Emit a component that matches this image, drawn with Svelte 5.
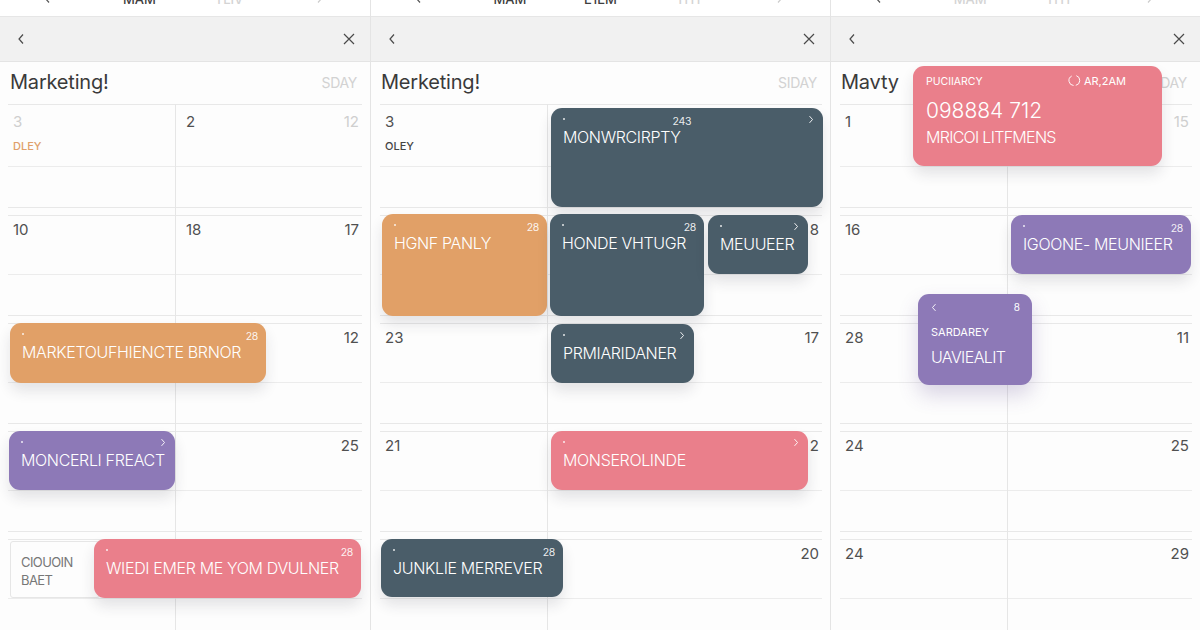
<script lang="ts">
	type Ev = {
		x: number;
		y: number;
		w: number;
		h: number;
		tone: string;
		label: string;
		corner?: string;
		chevron?: boolean;
	};

	const panels = [
		{
			tabs: ['MAM', 'TLIV'],
			tabOn: [0],
			title: 'Marketing!',
			side: 'SDAY',
			weeks: [
				{ left: '3', leftDim: true, note: 'DLEY', noteTone: 'warm', mid: '2', right: '12', rightDim: true },
				{ left: '10', mid: '18', right: '17' },
				{ right: '12' },
				{ right: '25' },
				{}
			],
			events: [
				{ x: 10, y: 323, w: 256, h: 60, tone: 'orange', label: 'MARKETOUFHIENCTE BRNOR', corner: '28' },
				{ x: 9, y: 431, w: 166, h: 59, tone: 'purple', label: 'MONCERLI FREACT', chevron: true },
				{ x: 94, y: 539, w: 267, h: 59, tone: 'pink', label: 'WIEDI EMER ME YOM DVULNER', corner: '28' }
			] as Ev[]
		},
		{
			tabs: ['MAM', 'E1EM', 'THY'],
			tabOn: [0, 1],
			title: 'Merketing!',
			side: 'SIDAY',
			weeks: [
				{ left: '3', note: 'OLEY' },
				{ right: '8' },
				{ left: '23', right: '17' },
				{ left: '21', right: '2' },
				{ right: '20' }
			],
			events: [
				{ x: 180, y: 108, w: 272, h: 99, tone: 'slate', label: 'MONWRCIRPTY', corner: '243', chevron: true },
				{ x: 11, y: 214, w: 165, h: 102, tone: 'orange', label: 'HGNF PANLY', corner: '28' },
				{ x: 179, y: 214, w: 154, h: 102, tone: 'slate', label: 'HONDE VHTUGR', corner: '28' },
				{ x: 337, y: 215, w: 100, h: 59, tone: 'slate', label: 'MEUUEER', chevron: true },
				{ x: 180, y: 324, w: 143, h: 59, tone: 'slate', label: 'PRMIARIDANER', chevron: true },
				{ x: 180, y: 431, w: 257, h: 59, tone: 'pink', label: 'MONSEROLINDE', chevron: true },
				{ x: 10, y: 539, w: 182, h: 58, tone: 'slate', label: 'JUNKLIE MERREVER', corner: '28' }
			] as Ev[]
		},
		{
			tabs: ['MAM', 'THY'],
			tabOn: [],
			title: 'Mavty',
			side: 'SIDAY',
			weeks: [
				{ left: '1', right: '15', rightDim: true },
				{ left: '16' },
				{ left: '28', right: '11' },
				{ left: '24', right: '25' },
				{ left: '24', right: '29' }
			],
			events: [
				{ x: 180, y: 215, w: 180, h: 59, tone: 'purple', label: 'IGOONE- MEUNIEER', corner: '28' }
			] as Ev[]
		}
	];
</script>

{#snippet chevronIcon(dir: string)}
	<svg class="chev" viewBox="0 0 8 12" width="8" height="12" aria-hidden="true">
		<path d={dir === 'left' ? 'M6 1.5 2 6l4 4.5' : 'M2 1.5 6 6l-4 4.5'} />
	</svg>
{/snippet}

<div class="board">
	{#each panels as panel, p}
		<section class="panel">
			<div class="tabs">
				<span class="tab">{@render chevronIcon('left')}</span>
				{#each panel.tabs as tab, i}
					<span class="tab" class:on={panel.tabOn.includes(i)}>{tab}</span>
				{/each}
				<span class="tab faint">{@render chevronIcon('right')}</span>
			</div>

			<header class="nav">
				{@render chevronIcon('left')}
				<svg class="close" viewBox="0 0 12 12" width="12" height="12" aria-hidden="true">
					<path d="M1 1l10 10M11 1 1 11" />
				</svg>
			</header>

			<div class="heading">
				<h2>{panel.title}</h2>
				<span>{panel.side}</span>
			</div>

			<div class="cal">
				{#each panel.weeks as week}
					<div class="week">
						<div class="days">
							<div class="cell">
								<span class="num" class:dim={week.leftDim}>{week.left ?? ''}</span>
								{#if week.note}
									<span class="note {week.noteTone ?? ''}">{week.note}</span>
								{/if}
							</div>
							<div class="cell split">
								<span class="num">{week.mid ?? ''}</span>
								<span class="num" class:dim={week.rightDim}>{week.right ?? ''}</span>
							</div>
						</div>
						<div class="spare"></div>
					</div>
				{/each}
			</div>

			{#if p === 0}
				<div class="ghost">CIOUOIN<br />BAET</div>
			{/if}

			{#if p === 2}
				<article class="event pink feature">
					<div class="meta">
						<span>PUCIIARCY</span>
						<span class="time">
							<svg viewBox="0 0 14 14" width="13" height="13" aria-hidden="true">
								<path d="M4 2.2A5.4 5.4 0 0 0 6 12.4M9 1.8a5.4 5.4 0 0 1-.6 10.4" />
							</svg>
							AR,2AM
						</span>
					</div>
					<div class="amount">098884 712</div>
					<div class="label">MRICOI LITFMENS</div>
				</article>
				<article class="event purple small">
					<div class="meta">
						{@render chevronIcon('left')}
						<span class="glyph">8</span>
					</div>
					<div class="sub">SARDAREY</div>
					<div class="label">UAVIEALIT</div>
				</article>
			{/if}

			{#each panel.events as ev}
				<article
					class="event {ev.tone}"
					style="left:{ev.x}px;top:{ev.y}px;width:{ev.w}px;height:{ev.h}px"
				>
					<i class="dot"></i>
					{#if ev.corner}
						<span class="corner" class:mid={ev.chevron}>{ev.corner}</span>
					{/if}
					{#if ev.chevron}
						<span class="arrow">{@render chevronIcon('right')}</span>
					{/if}
					<div class="label">{ev.label}</div>
				</article>
			{/each}
		</section>
	{/each}
</div>

<style>
	:global(body) {
		background: #fdfdfd;
		overflow: hidden;
	}

	.board {
		display: grid;
		grid-template-columns: 371px 460px 369px;
		height: 630px;
		font-family: Inter, 'Liberation Sans', sans-serif;
		color: #444;
	}

	.panel {
		position: relative;
		display: flex;
		flex-direction: column;
		height: 630px;
		overflow: hidden;
		border-right: 1px solid #e4e4e4;
		box-sizing: border-box;
	}

	.panel:last-child {
		border-right: 0;
	}

	.tabs {
		flex: none;
		display: flex;
		justify-content: space-between;
		align-items: flex-start;
		height: 16px;
		padding: 0 35px 0 32px;
		overflow: hidden;
		background: #fff;
		border-bottom: 1px solid #e6e6e6;
	}

	.tab {
		width: 30px;
		margin-top: -7px;
		font-size: 13px;
		line-height: 13px;
		font-weight: 500;
		text-align: center;
		color: #d4d4d4;
	}

	.tab.on {
		color: #3f3f3f;
	}

	.tab .chev {
		stroke: #555;
		margin: -1px auto 0;
	}

	.tab.faint .chev {
		stroke: #ccc;
	}

	.nav {
		flex: none;
		display: flex;
		justify-content: space-between;
		align-items: center;
		height: 44px;
		padding: 0 15px 0 17px;
		background: #f1f1f1;
		border-bottom: 1px solid #e4e4e4;
	}

	.chev {
		display: block;
		fill: none;
		stroke: #4a4a4a;
		stroke-width: 1.2;
	}

	.close {
		display: block;
		fill: none;
		stroke: #4a4a4a;
		stroke-width: 1.2;
	}

	.heading {
		flex: none;
		display: flex;
		justify-content: space-between;
		align-items: center;
		height: 42px;
		padding: 0 13px 3px 10px;
		box-sizing: border-box;
	}

	.heading h2 {
		margin: 0;
		font-size: 20px;
		font-weight: 400;
		letter-spacing: -0.2px;
		color: #3a3a3a;
	}

	.heading span {
		margin-top: 2px;
		font-size: 14px;
		letter-spacing: -0.3px;
		color: #d2d2d2;
	}

	.cal {
		position: relative;
		flex: 1 0 auto;
		margin: 0 8px 0 9px;
	}

	.panel:first-child .cal {
		margin-left: 8px;
	}

	.cal::after {
		content: '';
		position: absolute;
		top: 0;
		bottom: 0;
		left: 167px;
		width: 1px;
		background: #e6e6e6;
	}

	.week {
		border-top: 1px solid #e8e8e8;
		margin-bottom: 7px;
	}

	.days {
		display: grid;
		grid-template-columns: 167px 1fr;
		height: 58px;
		border-bottom: 1px solid #ececec;
	}

	.week:first-child .days {
		height: 62px;
		padding-top: 3px;
		box-sizing: border-box;
	}

	.spare {
		height: 40px;
		border-bottom: 1px solid #e8e8e8;
	}

	.cell {
		padding: 5px 3px 0 5px;
		font-size: 15px;
		line-height: 18px;
		color: #505050;
	}

	.split {
		display: flex;
		justify-content: space-between;
		padding-left: 11px;
	}

	.num {
		display: block;
		min-height: 18px;
	}

	.dim {
		color: #cfcfcf;
	}

	.note {
		display: block;
		margin-top: 8px;
		font-size: 11px;
		line-height: 14px;
		font-weight: 500;
		color: #444;
	}

	.note.warm {
		color: #e0a06a;
	}

	.ghost {
		position: absolute;
		left: 10px;
		top: 541px;
		width: 90px;
		height: 57px;
		padding: 11px 0 0 10px;
		box-sizing: border-box;
		border: 1px solid #e6e6e6;
		border-radius: 3px;
		font-size: 13px;
		line-height: 18px;
		letter-spacing: -0.6px;
		color: #777;
	}

	.event {
		position: absolute;
		box-sizing: border-box;
		padding: 19px 12px 0;
		border-radius: 11px;
		color: #fff;
		box-shadow: 0 8px 14px rgba(40, 40, 60, 0.12);
		z-index: 1;
	}

	.orange {
		background: #e1a067;
	}

	.purple {
		background: #8d79b7;
	}

	.pink {
		background: #ea7f8b;
	}

	.slate {
		background: #4a5d69;
	}

	.dot {
		position: absolute;
		left: 12px;
		top: 10px;
		width: 2px;
		height: 2px;
		border-radius: 50%;
		background: rgba(255, 255, 255, 0.85);
	}

	.corner {
		position: absolute;
		right: 8px;
		top: 7px;
		font-size: 10.5px;
		line-height: 13px;
		letter-spacing: -0.3px;
		color: rgba(255, 255, 255, 0.9);
	}

	.corner.mid {
		right: 48.5%;
	}

	.arrow {
		position: absolute;
		right: 9px;
		top: 7px;
	}

	.arrow .chev {
		width: 6px;
		height: 9px;
		stroke: #fff;
	}

	.label {
		font-size: 16px;
		line-height: 20px;
		font-weight: 300;
		letter-spacing: -0.35px;
		white-space: nowrap;
	}

	.feature {
		left: 82px;
		top: 66px;
		width: 249px;
		height: 100px;
		padding: 9px 13px 0;
	}

	.feature .meta {
		display: flex;
		justify-content: space-between;
		padding-right: 23px;
		font-size: 10.5px;
		line-height: 14px;
	}

	.time {
		display: flex;
		align-items: center;
		gap: 3px;
		margin-top: -3px;
		font-size: 11px;
	}

	.time svg {
		fill: none;
		stroke: #fff;
		stroke-width: 1;
	}

	.amount {
		margin-top: 10px;
		font-size: 21px;
		line-height: 24px;
		font-weight: 300;
	}

	.feature .label {
		margin-top: 4px;
		letter-spacing: -0.7px;
	}

	.small {
		left: 87px;
		top: 294px;
		width: 114px;
		height: 91px;
		padding: 7px 12px 0 13px;
		box-shadow: 0 10px 20px rgba(90, 70, 140, 0.22);
	}

	.small .meta {
		display: flex;
		justify-content: space-between;
		align-items: center;
		height: 12px;
	}

	.small .meta .chev {
		width: 6px;
		height: 9px;
		stroke: #fff;
	}

	.glyph {
		font-size: 10px;
	}

	.sub {
		margin-top: 12px;
		font-size: 11px;
		line-height: 14px;
	}

	.small .label {
		margin-top: 8px;
		letter-spacing: -0.6px;
	}
</style>
